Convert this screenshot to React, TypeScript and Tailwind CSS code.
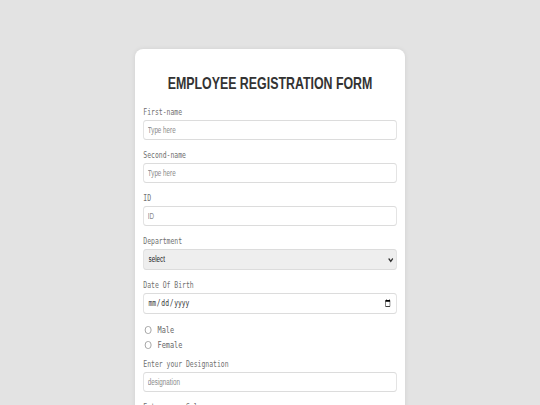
import React from 'react';

const textFields = [
  { label: 'First-name', placeholder: 'Type here' },
  { label: 'Second-name', placeholder: 'Type here' },
  { label: 'ID', placeholder: 'ID' },
];

function Label({ children }: { children: React.ReactNode }) {
  return (
    <p className="h-[12px] mb-[2px] font-['DejaVu_Sans_Mono',monospace] text-[8.6px] leading-[12px] text-[#707070]">
      {children}
    </p>
  );
}

function TextInput({ placeholder }: { placeholder: string }) {
  return (
    <input
      type="text"
      placeholder={placeholder}
      className="block w-full h-[20px] px-[5px] bg-white border border-[#dcdcdc] rounded-[4px_/_3px] font-['Liberation_Sans',sans-serif] text-[8.4px] text-[#333] placeholder:text-[#8a8a8a] outline-none"
    />
  );
}

export default function App() {
  return (
    <div className="w-[540px] h-[405px] overflow-hidden bg-[#e3e3e3]">
      <div className="w-[720px] origin-top-left scale-x-75 flex justify-center pt-[49px]">
        <form className="w-[360px] bg-white rounded-[11px_/_8px] shadow-[0_0_6px_rgba(0,0,0,0.08)] px-[11px] pt-[24px] pb-8">
          <h1 className="text-center font-['Liberation_Sans',Arial,sans-serif] font-bold text-[16.5px] leading-[20px] text-[#333] mb-[13px]">
            EMPLOYEE REGISTRATION FORM
          </h1>

          {textFields.map((f) => (
            <div key={f.label} className="mb-[9px]">
              <Label>{f.label}</Label>
              <TextInput placeholder={f.placeholder} />
            </div>
          ))}

          <div className="mb-[9px]">
            <Label>Department</Label>
            <div className="flex items-center h-[21px] bg-[#eeeeee] border border-[#dcdcdc] rounded-[4px_/_3px] pr-[3px]">
              <select className="flex-1 h-full appearance-none bg-transparent px-[6px] font-['Liberation_Sans',sans-serif] text-[8.4px] text-[#222] outline-none">
                <option>select</option>
                <option>HR</option>
                <option>Finance</option>
                <option>IT</option>
              </select>
              <svg width="8" height="6" viewBox="0 0 8 6" className="shrink-0">
                <path d="M1.2 1.5 L4 4.3 L6.8 1.5" fill="none" stroke="#333" strokeWidth="1.6" />
              </svg>
            </div>
          </div>

          <div className="mb-[8px]">
            <Label>Date Of Birth</Label>
            <input
              type="date"
              className="block w-full h-[21px] px-[5px] bg-white border border-[#dcdcdc] rounded-[4px_/_3px] font-['DejaVu_Sans_Mono',monospace] text-[8.4px] text-[#333] outline-none"
            />
          </div>

          <div className="flex flex-col mb-[6px]">
            {['Male', 'Female'].map((g) => (
              <label key={g} className="flex items-center h-[15px] pl-[2px] gap-[8px] font-['DejaVu_Sans_Mono',monospace] text-[9.2px] text-[#666]">
                <input type="radio" name="gender" className="appearance-none w-[9px] h-[8px] rounded-full border border-[#9a9a9a] bg-white" />
                {g}
              </label>
            ))}
          </div>

          <div className="mb-[9px]">
            <Label>Enter your Designation</Label>
            <TextInput placeholder="designation" />
          </div>

          <div className="mb-[9px]">
            <Label>Enter your Salary</Label>
            <TextInput placeholder="salary" />
          </div>
        </form>
      </div>
    </div>
  );
}
